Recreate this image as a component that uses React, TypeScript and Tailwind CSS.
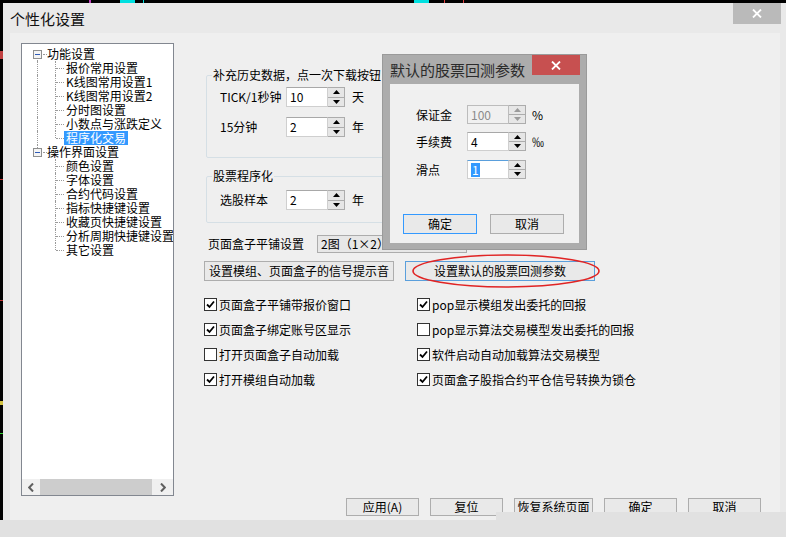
import React from 'react';

type Row = { label: string; root?: boolean; first?: boolean; rootLine?: boolean; last?: boolean; selected?: boolean };

const treeRows: Row[] = [
  { label: '功能设置', root: true, first: true },
  { label: '报价常用设置', rootLine: true },
  { label: 'K线图常用设置1', rootLine: true },
  { label: 'K线图常用设置2', rootLine: true },
  { label: '分时图设置', rootLine: true },
  { label: '小数点与涨跌定义', rootLine: true },
  { label: '程序化交易', rootLine: true, last: true, selected: true },
  { label: '操作界面设置', root: true },
  { label: '颜色设置' },
  { label: '字体设置' },
  { label: '合约代码设置' },
  { label: '指标快捷键设置' },
  { label: '收藏页快捷键设置' },
  { label: '分析周期快捷键设置' },
  { label: '其它设置', last: true },
];

const checks: [string, boolean][] = [
  ['页面盒子平铺带报价窗口', true],
  ['pop显示模组发出委托的回报', true],
  ['页面盒子绑定账号区显示', true],
  ['pop显示算法交易模型发出委托的回报', false],
  ['打开页面盒子自动加载', false],
  ['软件启动自动加载算法交易模型', true],
  ['打开模组自动加载', true],
  ['页面盒子股指合约平仓信号转换为锁仓', true],
];

// 树形控件的一行
const TreeItem: React.FC<{ row: Row }> = ({ row }) => {
  if (row.root) {
    return (
      <div className="flex h-[14px] items-center">
        <div className="relative h-full w-[25px] shrink-0">
          {row.first ? (
            <span className="absolute bottom-0 left-[15px] top-[11px] border-l border-dotted border-[#9a9a9a]" />
          ) : (
            <span className="absolute left-[15px] top-0 h-[3px] border-l border-dotted border-[#9a9a9a]" />
          )}
          <span className="absolute left-[11px] top-[3px] flex h-[9px] w-[9px] items-center justify-center border border-[#8e8f8f] bg-[#f4f4f4]">
            <span className="h-[1px] w-[5px] bg-[#2f5bb7]" />
          </span>
          <span className="absolute left-[21px] top-[7px] w-[4px] border-t border-dotted border-[#9a9a9a]" />
        </div>
        <span className="leading-[14px]">{row.label}</span>
      </div>
    );
  }
  return (
    <div className="flex h-[14px] items-center">
      <div className="relative h-full w-[25px] shrink-0">
        {row.rootLine && <span className="absolute bottom-0 left-[15px] top-0 border-l border-dotted border-[#9a9a9a]" />}
      </div>
      <div className="relative h-full w-[17px] shrink-0">
        <span
          className={`absolute left-[8px] top-0 border-l border-dotted border-[#9a9a9a] ${row.last ? 'h-[7px]' : 'bottom-0'}`}
        />
        <span className="absolute left-[9px] top-[7px] w-[8px] border-t border-dotted border-[#9a9a9a]" />
      </div>
      <span className={`px-[2px] leading-[14px] ${row.selected ? 'bg-[#3399ff] text-white' : ''}`}>{row.label}</span>
    </div>
  );
};

const Arrow: React.FC<{ up?: boolean; color?: string }> = ({ up, color = '#000' }) => (
  <svg width="7" height="4" viewBox="0 0 7 4">
    {up ? <polygon points="3.5,0 7,4 0,4" fill={color} /> : <polygon points="0,0 7,0 3.5,4" fill={color} />}
  </svg>
);

// 数字微调框
const Spin: React.FC<{ value: string; disabled?: boolean; focused?: boolean; h?: string }> = ({
  value,
  disabled,
  focused,
  h = 'h-[20px]',
}) => (
  <div className={`flex w-[59px] shrink-0 ${h}`}>
    <div
      className={`flex flex-1 items-center border pl-[3px] leading-[14px] ${
        disabled
          ? 'border-[#bcbcbc] bg-[#f0f0f0] text-[#8b8b8b]'
          : focused
            ? 'border-[#cfcfcf] border-t-[#5a9fdc] bg-white'
            : 'border-[#cfcfcf] border-t-[#a8a8a8] bg-white'
      }`}
    >
      {focused ? <span className="bg-[#3399ff] px-[1px] text-white">{value}</span> : value}
    </div>
    <div className="flex w-[17px] flex-col border border-l-0 border-[#acacac] bg-[#e6e6e6]">
      <div className="flex flex-1 items-center justify-center border-b border-[#acacac]">
        <Arrow up color={disabled ? '#9a9a9a' : '#000'} />
      </div>
      <div className="flex flex-1 items-center justify-center">
        <Arrow color={disabled ? '#9a9a9a' : '#000'} />
      </div>
    </div>
  </div>
);

const Check: React.FC<{ on: boolean }> = ({ on }) => (
  <span className="flex h-[13px] w-[13px] shrink-0 items-center justify-center border border-[#333] bg-white">
    {on && (
      <svg width="9" height="9" viewBox="0 0 9 9">
        <path d="M1 4.5 L3.5 7 L8 1.5" fill="none" stroke="#000" strokeWidth="1.8" />
      </svg>
    )}
  </span>
);

const CloseX: React.FC = () => (
  <svg width="10" height="9" viewBox="0 0 10 9">
    <path d="M1 0.5 L9 8.5 M9 0.5 L1 8.5" stroke="#fff" strokeWidth="1.8" />
  </svg>
);

const App: React.FC = () => {
  return (
    <div className="relative flex h-[537px] w-[786px] flex-col overflow-hidden whitespace-nowrap bg-black font-['Noto_Sans_CJK_SC','Liberation_Sans',sans-serif] text-[12px] text-black">
      {/* 顶部行情残留 */}
      <div className="flex h-[3px] shrink-0 bg-black">
        <span className="ml-[89px] w-[2px] bg-[#c040c0]" />
        <span className="ml-[29px] w-[15px] bg-[#00e0e0]" />
        <span className="ml-[8px] w-[1px] bg-[#00e0e0]" />
        <span className="ml-[270px] w-[15px] bg-[#00e0e0]" />
        <span className="ml-[15px] w-[1px] bg-[#e04040]" />
        <span className="ml-[18px] w-[1px] bg-[#e04040]" />
      </div>

      <div className="flex h-[517px] shrink-0">
        {/* 左侧行情残留 */}
        <div className="flex w-[3px] shrink-0 flex-col bg-black">
          <span className="mt-[48px] h-[8px] bg-[#c04040]" />
          <span className="mt-[120px] h-[1px] bg-[#c03030]" />
          <span className="mt-[120px] h-[1px] bg-[#c03030]" />
          <span className="mt-[100px] h-[4px] bg-[#d0c040]" />
          <span className="mt-[28px] h-[1px] bg-[#30d030]" />
        </div>

        {/* 主窗口 */}
        <div className="flex flex-1 flex-col bg-[#e9e9e9]">
          <div className="flex h-[30px] shrink-0 items-start">
            <span className="pl-[7px] pt-[5px] text-[15px] leading-[22px] text-[#111]">个性化设置</span>
            <div className="ml-auto mr-[5px] flex h-[21px] w-[48px] items-center justify-center bg-[#bababa]">
              <CloseX />
            </div>
          </div>

          <div className="mb-0 ml-[7px] mr-[6px] flex h-[487px] bg-[#efefef] pl-[11px] pt-[10px]">
            {/* 树形列表 */}
            <div className="flex h-[453px] w-[153px] shrink-0 flex-col overflow-hidden border border-[#828790] bg-white">
              <div className="flex-1 overflow-hidden pt-[3px]">
                {treeRows.map((r) => (
                  <TreeItem key={r.label} row={r} />
                ))}
              </div>
              <div className="flex h-[16px] shrink-0 items-center bg-[#f0f0f0]">
                <div className="flex w-[18px] justify-center">
                  <svg width="6" height="9" viewBox="0 0 6 9">
                    <path d="M5 0.5 L1.2 4.5 L5 8.5" fill="none" stroke="#606060" strokeWidth="2" />
                  </svg>
                </div>
                <div className="h-full w-[112px] bg-[#cdcdcd]" />
                <div className="flex flex-1 justify-center">
                  <svg width="6" height="9" viewBox="0 0 6 9">
                    <path d="M1 0.5 L4.8 4.5 L1 8.5" fill="none" stroke="#606060" strokeWidth="2" />
                  </svg>
                </div>
              </div>
            </div>

            {/* 右侧设置 */}
            <div className="flex flex-1 flex-col pb-[4px] pl-[30px] pr-[19px]">
              <fieldset className="ml-[2px] mt-[25px] w-[264px] rounded-[2px] border border-[#d5dfe5] pb-[20px] pl-[5px]">
                <legend className="px-[1px] leading-[14px]">补充历史数据，点一次下载按钮</legend>
                <div className="mt-[5px] flex h-[20px] items-center pl-[8px]">
                  <span className="w-[66px]">TICK/1秒钟</span>
                  <Spin value="10" />
                  <span className="ml-[7px]">天</span>
                </div>
                <div className="mt-[10px] flex h-[20px] items-center pl-[8px]">
                  <span className="w-[66px]">15分钟</span>
                  <Spin value="2" />
                  <span className="ml-[7px]">年</span>
                </div>
              </fieldset>

              <fieldset className="ml-[2px] mt-[11px] w-[264px] rounded-[2px] border border-[#d5dfe5] pb-[12px] pl-[5px]">
                <legend className="px-[1px] leading-[14px]">股票程序化</legend>
                <div className="mt-[7px] flex h-[20px] items-center pl-[8px]">
                  <span className="w-[66px]">选股样本</span>
                  <Spin value="2" />
                  <span className="ml-[7px]">年</span>
                </div>
              </fieldset>

              <div className="mt-[12px] flex h-[18px] items-center">
                <span className="w-[113px] pl-[4px]">页面盒子平铺设置</span>
                <div className="flex h-[18px] w-[150px] items-center border border-[#acacac] bg-[#e7e7e7] pl-[3px]">
                  2图（1×2）
                </div>
              </div>

              <div className="mt-[8px] flex h-[20px]">
                <div className="flex w-[190px] items-center justify-center border border-[#adadad] bg-[#e9e9e9]">
                  设置模组、页面盒子的信号提示音
                </div>
                <div className="ml-[11px] flex w-[190px] items-center justify-center border border-[#5a9fdc] bg-[#e9e9e9]">
                  设置默认的股票回测参数
                </div>
              </div>

              <div className="mt-[11px] grid grid-cols-[213px_auto]">
                {checks.map(([t, on]) => (
                  <div key={t} className="flex h-[25px] items-center">
                    <Check on={on} />
                    <span className="ml-[2px] leading-[14px]">{t}</span>
                  </div>
                ))}
              </div>

              <div className="mt-auto flex h-[18px] justify-end gap-[11px]">
                {[
                  ['应用(A)', 'w-[73px]'],
                  ['复位', 'w-[73px]'],
                  ['恢复系统页面', 'w-[79px]'],
                  ['确定', 'w-[73px]'],
                  ['取消', 'w-[73px]'],
                ].map(([t, w]) => (
                  <div key={t} className={`flex items-center justify-center border border-[#adadad] bg-[#e9e9e9] ${w}`}>
                    {t}
                  </div>
                ))}
              </div>
            </div>
          </div>
        </div>
      </div>

      <div className="h-[17px] shrink-0 bg-[#e1e1e1]" />
      <div className="absolute left-[496px] top-[512px] h-[8px] w-[290px] bg-[#e1e1e1]" />

      {/* 红色圈注 */}
      <svg className="absolute left-[410px] top-[253px]" width="192" height="36" viewBox="0 0 192 36">
        <ellipse cx="96" cy="18" rx="93" ry="16" fill="none" stroke="#e02424" strokeWidth="1.6" />
      </svg>

      {/* 弹出对话框 */}
      <div className="absolute left-[382px] top-[54px] flex h-[196px] w-[205px] flex-col border border-[#9a9a9a] bg-[#acacac]">
        <div className="flex h-[29px] shrink-0 items-start">
          <span className="pl-[7px] pt-[5px] text-[15px] leading-[20px] text-[#2b2b2b]">默认的股票回测参数</span>
          <div className="ml-auto mr-[6px] flex h-[20px] w-[48px] items-center justify-center bg-[#c75050]">
            <CloseX />
          </div>
        </div>
        <div className="mx-[7px] mb-[6px] flex flex-1 flex-col bg-[#f0f0f0] pl-[26px] pt-[21px]">
          <div className="flex h-[19px] items-center">
            <span className="w-[51px]">保证金</span>
            <Spin value="100" disabled h="h-[19px]" />
            <span className="ml-[6px]">%</span>
          </div>
          <div className="mt-[8px] flex h-[19px] items-center">
            <span className="w-[51px]">手续费</span>
            <Spin value="4" h="h-[19px]" />
            <span className="ml-[6px]">‰</span>
          </div>
          <div className="mt-[9px] flex h-[19px] items-center">
            <span className="w-[51px]">滑点</span>
            <Spin value="1" focused h="h-[19px]" />
          </div>
          <div className="-ml-[13px] mt-[35px] flex h-[20px]">
            <div className="flex w-[74px] items-center justify-center border border-[#3399ff] bg-[#e9e9e9]">确定</div>
            <div className="ml-[13px] flex w-[74px] items-center justify-center border border-[#adadad] bg-[#e9e9e9]">
              取消
            </div>
          </div>
        </div>
      </div>
    </div>
  );
};

export default App;
